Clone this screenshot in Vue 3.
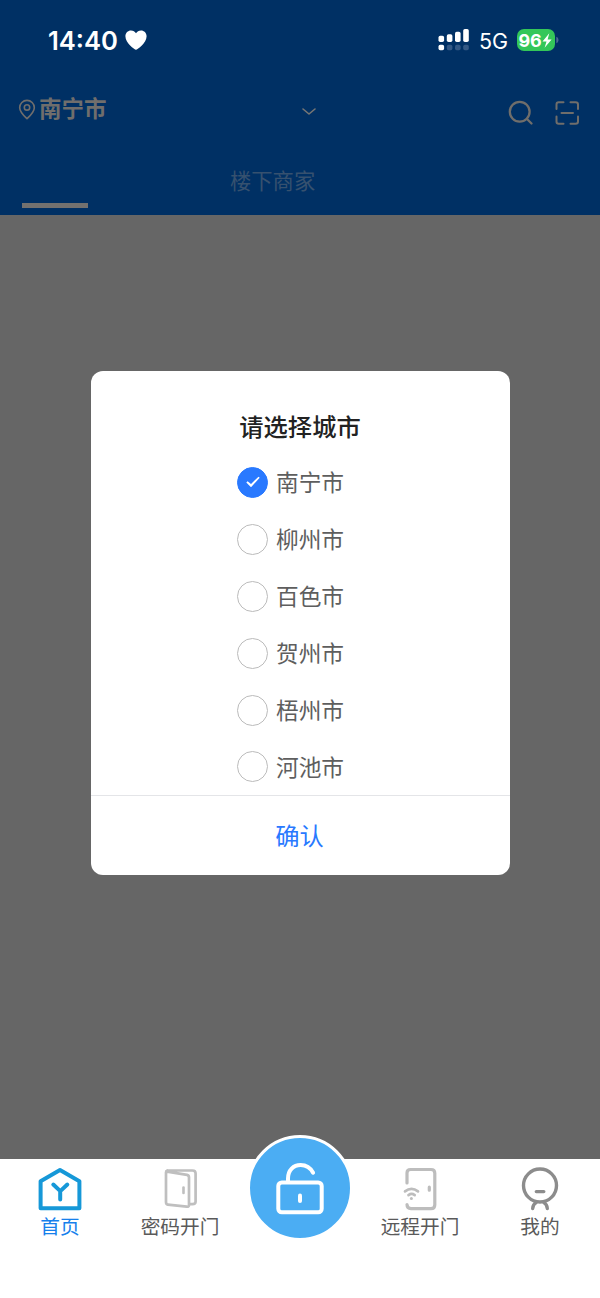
<script setup>
import { ref } from 'vue'

const cities = ['南宁市', '柳州市', '百色市', '贺州市', '梧州市', '河池市']
const selected = ref('南宁市')
</script>

<template>
  <div class="screen">
    <header class="header">
      <div class="status">
        <span class="time">14:40</span>
        <svg class="heart" width="22" height="20" viewBox="0 0 22 20"><path d="M11 19.7C9.600 19.500 .4 13 .4 6.200 .4 2.800 2.900.4 6 .4c2.200 0 4 1.100 5 2.900C12 1.500 13.800.4 16 .4c3.100 0 5.600 2.400 5.600 5.800C21.600 13 12.400 19.500 11 19.700Z" fill="#fff" /></svg>
        <svg class="signal" width="32" height="22" viewBox="0 0 32 22" fill="#fff">
          <rect x=".5" y="6.800" width="5.600" height="6.200" rx="1.700" />
          <rect x="8.800" y="5.300" width="5.600" height="7.700" rx="1.700" />
          <rect x="17" y="2.800" width="5.600" height="10.200" rx="1.700" />
          <rect x="25.200" y=".1" width="5.600" height="12.900" rx="1.700" />
          <rect x=".5" y="15.700" width="5.600" height="5.600" rx="1.700" />
          <g fill="#345985">
            <rect x="8.800" y="15.700" width="5.600" height="5.600" rx="1.700" />
            <rect x="17" y="15.700" width="5.600" height="5.600" rx="1.700" />
            <rect x="25.200" y="15.700" width="5.600" height="5.600" rx="1.700" />
          </g>
        </svg>
        <span class="network">5G</span>
        <span class="battery">
          <span class="level">96</span>
          <svg width="10" height="15" viewBox="0 0 10 15"><path d="M7.300.3.5 8.400h4L2.600 14.700 9.600 6.500H5.600Z" fill="#fff" /></svg>
        </span>
        <svg class="cap" width="3" height="8" viewBox="0 0 3 8"><path d="M.3.8C3.200 1.700 3.200 6.300.3 7.200Z" fill="#4d6c92" /></svg>
      </div>
      <div class="location">
        <svg class="pin" width="18" height="22" viewBox="0 0 18 22" fill="none" stroke="#706e6c" stroke-width="1.600"><path d="M9 19.700C5.700 16.500 1.700 12.900 1.700 8.700a7.300 7.300 0 0 1 14.600 0C16.300 12.900 12.300 16.500 9 19.700Z" stroke-linejoin="round" /><circle cx="9" cy="8.400" r="2.700" /></svg>
        <span class="city">南宁市</span>
        <svg class="chevron" width="16" height="10" viewBox="0 0 16 10"><path d="m2 2 6 5 6-5" fill="none" stroke="#777674" stroke-width="1.600" stroke-linecap="round" stroke-linejoin="round" /></svg>
        <svg class="search" width="26" height="26" viewBox="0 0 26 26" fill="none" stroke="#706e6b" stroke-width="2.300" stroke-linecap="round"><circle cx="11.700" cy="11.700" r="9.900" /><path d="m19 19 4.500 4.500" /></svg>
        <svg class="scan" width="26" height="26" viewBox="0 0 26 26" fill="none" stroke="#706e6b" stroke-width="2" stroke-linecap="round"><path d="M2.500 9V4.500Q2.500 2.300 4.700 2.300H9.500M16.500 2.300h5Q24 2.300 24 4.500V9M24 16.500v5Q24 23.800 21.500 23.800H16.500M9.500 23.800H4.700Q2.500 23.800 2.500 21.500V16.500M7.500 13h11.500" /></svg>
      </div>
      <nav class="tabs">
        <span class="underline"></span>
        <span class="shops">楼下商家</span>
      </nav>
    </header>

    <main class="body">
      <section class="dialog">
        <h1>请选择城市</h1>
        <ul class="cities">
          <li v-for="city in cities" :key="city" @click="selected = city">
            <span class="radio" :class="{ on: city === selected }">
              <svg v-if="city === selected" width="16" height="14" viewBox="0 0 16 14"><path d="M1.300 7.400 2.600 6.200 6 8.900 13.500 1.700 14.700 2.700 6 12.300Z" fill="#fff" /></svg>
            </span>
            <span class="name">{{ city }}</span>
          </li>
        </ul>
        <button class="confirm">确认</button>
      </section>
    </main>

    <footer class="tabbar">
      <div class="tab active">
        <svg width="48" height="46" viewBox="0 0 48 46" fill="none" stroke="#1698d8" stroke-width="4" stroke-linecap="round" stroke-linejoin="round"><path d="M4.600 15.200 24 4 43.400 15.200V42.300H4.600Z" /><path d="m17.300 18.500 7 6.600 7-6.600M24.200 25.500V33.500" stroke-width="4" /></svg>
        <span>首页</span>
      </div>
      <div class="tab">
        <svg width="48" height="46" viewBox="0 0 48 46" fill="none" stroke="#bfbfbf" stroke-width="2.700" stroke-linecap="round" stroke-linejoin="round"><path d="M11.200 4.500H36.500Q39.600 4.500 39.600 7.400V35.500Q39.600 38.200 36.500 38.200H33M11.200 4.500Q10 4.800 10 6.500V36Q10 38.300 11.800 38.700L30.700 40.700Q33 41 33 39V11.500Q33 9.300 31 8.900L11.200 5.700" /><path d="M27.500 21.500v5.500" stroke-width="2.600" /></svg>
        <span>密码开门</span>
      </div>
      <div class="tab center">
        <div class="unlock">
          <svg width="50" height="54" viewBox="0 0 50 54" fill="none" stroke="#fff" stroke-width="4" stroke-linecap="round" stroke-linejoin="round"><rect x="3.300" y="21.500" width="43.400" height="29.800" rx="3.500" /><path d="M13 21V17.500C13 9 18.500 4 25.600 4c5.500 0 9.700 2.500 12.500 7.700" /><path d="M25 34.500v5.500" /></svg>
        </div>
      </div>
      <div class="tab">
        <svg width="48" height="46" viewBox="0 0 48 46" fill="none" stroke="#bdbdbd" stroke-width="3.200" stroke-linecap="round" stroke-linejoin="round"><path d="M11 17V7Q11 3.500 14.500 3.500H35Q38.800 3.500 38.800 7.300V38.700Q38.800 42.600 35 42.600H15Q11 42.600 11 38.600M33.300 21.200v3" /><path d="M9 25.400Q15.500 20.500 22 25.400M12.500 29.100q3.100-2.300 6.200 0" stroke-width="2.700" /><circle cx="15.400" cy="32.400" r="1.500" fill="#bdbdbd" stroke="none" /></svg>
        <span>远程开门</span>
      </div>
      <div class="tab">
        <svg width="48" height="46" viewBox="0 0 48 46" fill="none" stroke="#8c8c8c" stroke-width="3.400" stroke-linecap="round"><circle cx="24" cy="19.500" r="16.500" /><path d="M20.300 25.600h7.500M16.700 42.500c.2-2.800 1.200-4.800 3.500-6M31.300 42.500c-.2-2.800-1.200-4.800-3.500-6" /></svg>
        <span>我的</span>
      </div>
    </footer>
  </div>
</template>

<style>
body { background: #fff; }
</style>

<style scoped>
* { box-sizing: border-box; }
.screen { width: 600px; height: 1298px; display: flex; flex-direction: column; overflow: hidden; background: #fff; font-family: "Liberation Sans", "Noto Sans CJK SC", sans-serif; }
svg { display: block; flex: none; }
.header { height: 215px; background: #003064; flex: none; }
.status { height: 80px; display: flex; align-items: center; padding-left: 48px; color: #fff; font-family: Inter, sans-serif; }
.time { width: 77px; padding-top: 1px; font-size: 25.600px; font-weight: 600; line-height: 30px; white-space: nowrap; }
.signal { margin: 0 9px 0 291px; }
.network { width: 37.500px; padding-top: 2px; font-size: 21.500px; font-weight: 400; }
.battery { width: 38px; height: 22px; border-radius: 7px; background: #34c759; display: flex; align-items: center; justify-content: center; gap: 1px; }
.level { padding-top: 1px; font-size: 18px; font-weight: 700; line-height: 22px; letter-spacing: -.2px; }
.cap { margin-left: 1px; }
.location { height: 65px; display: flex; align-items: center; padding: 0 20px 6px 18px; }
.city { width: 68px; margin: 1px 0 0 3px; font-size: 22.500px; font-weight: 700; line-height: 34px; color: #706e6c; white-space: nowrap; }
.chevron { margin: 5px 0 0 194px; }
.search { margin: 7px 0 0 191px; }
.scan { margin: 7px 0 0 auto; }
.pin { margin-top: 0; }
.tabs { height: 70px; display: flex; padding-left: 22px; }
.underline { width: 66px; height: 5px; margin-top: 58px; background: #73716f; }
.shops { margin: 21px 0 0 142px; font-size: 21.300px; line-height: 32px; color: #36516f; }
.body { height: 944px; flex: none; background: #666; padding: 156px 90px 0 91px; }
.dialog { height: 504px; border-radius: 12px; background: #fff; display: flex; flex-direction: column; overflow: hidden; }
h1 { margin: 39px 1px 0 0; height: 44px; font-size: 24.300px; line-height: 36px; font-weight: 500; text-align: center; color: #222; }
.cities { list-style: none; margin: 0; padding: 0 0 0 146px; flex: none; height: 341px; }
.cities li { height: 56.900px; display: flex; align-items: center; gap: 8px; font-size: 22.700px; line-height: 34px; color: #5e5e5e; }
.name { padding-top: 2px; }
.radio { width: 31px; height: 31px; border-radius: 50%; border: 1.500px solid #bbb; display: flex; align-items: center; justify-content: center; }
.radio.on { background: #2979ff; border-color: #2979ff; }
.confirm { flex: 1; border: 0; border-top: 1px solid #e4e5e8; background: none; padding: 3px 2px 0 0; color: #2979ff; font: 24.300px/36px "Liberation Sans", "Noto Sans CJK SC", sans-serif; }
.tabbar { height: 139px; flex: none; display: flex; background: #fff; }
.tab { width: 120px; display: flex; flex-direction: column; align-items: center; padding-top: 7px; font-size: 19.700px; line-height: 30px; color: #5a5a5a; }
.tab > span { margin-top: 0; }
.active { color: #1680ec; }
.center { padding: 0; }
.unlock { width: 106px; height: 106px; margin-top: -24px; border-radius: 50%; border: 3px solid #fff; background: #4badf3; display: flex; align-items: center; justify-content: center; }
</style>
